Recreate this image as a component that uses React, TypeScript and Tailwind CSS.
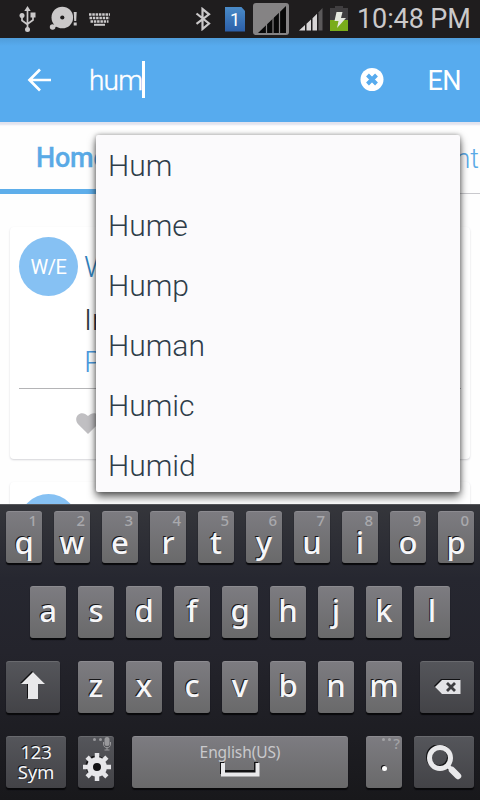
import type { ReactNode } from 'react'
import { clsx } from 'clsx'

const SUGGESTIONS = ['Hum', 'Hume', 'Hump', 'Human', 'Humic', 'Humid']

const TOP_ROW = [
  ['q', '1'],
  ['w', '2'],
  ['e', '3'],
  ['r', '4'],
  ['t', '5'],
  ['y', '6'],
  ['u', '7'],
  ['i', '8'],
  ['o', '9'],
  ['p', '0'],
]
const HOME_ROW = ['a', 's', 'd', 'f', 'g', 'h', 'j', 'k', 'l']
const BOTTOM_ROW = ['z', 'x', 'c', 'v', 'b', 'n', 'm']

export default function App() {
  return (
    <div className="flex h-[800px] w-[480px] flex-col overflow-hidden bg-white font-['Roboto',sans-serif]">
      <StatusBar />
      <SearchBar />
      <main className="relative h-[382px] shrink-0">
        <div className="h-full overflow-hidden bg-[#fefefe] shadow-[inset_0_5px_2px_-2px_#e2e3ee]">
          <Tabs />
          <Feed />
        </div>
        <Suggestions />
      </main>
      <Keyboard />
    </div>
  )
}

function StatusBar() {
  return (
    <div className="h-[38px] shrink-0 bg-[#1f1d1e]">
      <div className="flex h-full items-center text-[#cbc9ca]">
        <svg className="ml-[18px] shrink-0" width="19" height="28" viewBox="0 0 19 28" fill="none" stroke="currentColor" strokeWidth="1.7">
          <path d="M9.5 4v20M4 12v3.5l5.5 4M15 10v5l-5.5 4" />
          <path d="m9.5 1 3.2 5H6.3zM12.5 7.5h5v5h-5z" fill="currentColor" stroke="none" />
          <circle cx="4" cy="10.5" r="2.5" fill="currentColor" stroke="none" />
          <circle cx="9.5" cy="24.5" r="2.5" fill="currentColor" stroke="none" />
        </svg>
        <svg className="mb-0.5 ml-3 shrink-0" width="29" height="26" viewBox="0 0 29 26" fill="currentColor">
          <circle cx="13.3" cy="12.5" r="10.8" />
          <circle cx="13.3" cy="12.5" r="2.1" fill="#1f1d1e" />
          <circle cx="3.6" cy="22" r="2.8" />
          <path d="m5 19 3 2-3 2z" />
          <path d="M24.7 7h3l-.5 9h-2zM24.7 17.5h3v3h-3z" />
        </svg>
        <svg className="ml-[10px] shrink-0" width="23" height="13" viewBox="0 0 23 13" stroke="currentColor" strokeWidth="2.5">
          <path d="M1 1.5h21M1.5 5h20M2.5 8.5h18" strokeDasharray="2.5 0.8" />
          <path d="M6 11.8h11" strokeWidth="2" />
        </svg>
        <svg className="ml-[84px] shrink-0" width="16" height="24" viewBox="0 0 16 24" fill="none" stroke="currentColor" strokeWidth="2.2">
          <path d="m1.5 6.5 12.5 10-6.5 5.5V2l6.5 5.3-12.5 9.5" />
        </svg>
        <div className="ml-[14px] h-[25px] w-[20px] shrink-0 bg-[linear-gradient(#4a8bc8,#2b5ea8)] text-center text-[18px] leading-[25px] text-white [clip-path:polygon(0_0,80%_0,100%_18%,100%_100%,0_100%)]">
          1
        </div>
        <svg className="ml-2 shrink-0" width="36" height="32" viewBox="0 0 36 32">
          <rect width="36" height="32" rx="3" fill="#858384" />
          <path d="M5 30 33 3v27z" fill="#080808" />
          <path d="M13.5 16v14M20 10v20M26.5 4v26" stroke="#858384" strokeWidth="1.2" />
        </svg>
        <svg className="ml-[9px] shrink-0" width="26" height="24" viewBox="0 0 26 24">
          <path d="M1 23.5 7 18v5.5zM8.5 16.7l4.5-4.2v11H8.5zM14.5 11.2l4.5-4.4v16.7h-4.5z" fill="#d8d6d7" />
          <path d="M20.5 5.3 24.5 1v22.5h-4z" fill="#5b595a" />
        </svg>
        <svg className="ml-[6px] shrink-0" width="18" height="26" viewBox="0 0 18 26">
          <path d="M5 0h8v2h5v13H0V2h5z" fill="#403e40" />
          <path d="M0 14h18v11H0z" fill="#79ac1a" />
          <path d="M6.5 6h6L11 12h5L7 22l1.5-7h-4z" fill="#e5e8df" />
        </svg>
        <span className="ml-[9px] text-[27px] leading-[38px] tracking-[-0.1px] whitespace-nowrap">10:48 PM</span>
      </div>
    </div>
  )
}

function SearchBar() {
  return (
    <header className="flex h-[84px] shrink-0 items-center bg-[linear-gradient(#509dda,#57abee_8px)] text-white">
      <svg className="ml-[26px] shrink-0" width="26" height="24" viewBox="0 0 26 24" fill="none" stroke="currentColor" strokeWidth="2.7">
        <path d="M14 1.5 3.5 12 14 22.5M3 12h22" />
      </svg>
      <span className="mt-[2px] ml-[37px] text-[28px] leading-8 font-light tracking-[-0.8px] [-webkit-text-stroke:0.4px_white]">hum</span>
      <span className="-mt-px h-[37px] w-[3px] bg-white" />
      <svg className="ml-auto shrink-0" width="24" height="24" viewBox="0 0 24 24">
        <circle cx="12" cy="11.5" r="11.5" fill="white" />
        <path d="m7.5 7 9 9m0-9-9 9" stroke="#57abee" strokeWidth="4" />
      </svg>
      <span className="mt-[2px] mr-[19px] ml-[43px] text-[27px] leading-8 tracking-[-0.5px]">EN</span>
    </header>
  )
}

function Tabs() {
  return (
    <nav className="flex h-[72px] justify-between text-[27px] leading-[72px] text-[#5aaae6]">
      <div className="w-[160px] border-b-[5px] border-[#5eaeea] pl-[36px] font-medium tracking-[-0.2px] [-webkit-text-stroke:0.3px_#5aaae6]">Home</div>
      <div className="flex flex-1 justify-end overflow-hidden border-b border-[#c9c9cd] pt-px pr-px font-light">
        <span>nt</span>
      </div>
    </nav>
  )
}

function Feed() {
  return (
    <div className="flex flex-col gap-[23px] px-[10px] pt-[33px]">
      <article className="h-[232px] rounded-sm bg-white px-[9px] pt-[10px] shadow-[0_1px_2px_#d4d4d8]">
        <div className="flex h-[152px] gap-[6px] border-b border-[#b4b4b6]">
          <Avatar />
          <div className="text-[30px] leading-[48px] font-light text-[#4c9ade]">
            <p className="mt-[6px] text-[#3181bc]">W</p>
            <p className="mt-[5px] text-[#26333d]">In</p>
            <p className="-mt-[6px]">P</p>
          </div>
        </div>
        <svg className="mt-[24px] ml-[57px]" width="24" height="21" viewBox="0 0 24 21" fill="#c0bfc2">
          <path d="M12 21 2.4 11.5C-.7 8-.3 4 2 1.9c2.5-2.6 7-2.3 10 1.2 3-3.5 7.5-3.8 10-1.2 2.3 2.1 2.7 6.1-.4 9.6z" />
        </svg>
      </article>
      <article className="h-[232px] rounded-sm bg-white px-[9px] pt-[12px] shadow-[0_1px_2px_#d4d4d8]">
        <Avatar />
      </article>
    </div>
  )
}

function Avatar() {
  return (
    <div className="flex size-[59px] shrink-0 items-center justify-center rounded-full bg-[#86c1f3] text-[20px] tracking-[-0.4px] text-white">
      W/E
    </div>
  )
}

function Suggestions() {
  return (
    <ul className="absolute top-[13px] left-[96px] h-[357px] w-[364px] rounded-[2px] bg-[#fbfafc] shadow-[0_5px_9px_rgba(0,0,0,0.6),0_0_5px_rgba(0,0,0,0.35)]">
      {SUGGESTIONS.map((word) => (
        <li key={word} className="h-[60px] pl-[12px] text-[30px] leading-[61px] font-light text-[#2f3d49]">
          {word}
        </li>
      ))}
    </ul>
  )
}

type KeyProps = {
  children: ReactNode
  className?: string
  dark?: boolean
}

function Key({ children, className = 'w-[36px]', dark = false }: KeyProps) {
  return (
    <button
      type="button"
      className={clsx(
        'relative flex h-[52px] shrink-0 items-center justify-center rounded-[3px] text-[#f6f6f8] shadow-[0_2px_1px_#08080a,inset_0_1px_0_rgba(255,255,255,0.12)] [text-shadow:-1px_-1px_0_#161618]',
        dark ? 'bg-[linear-gradient(#55565b,#434347)]' : 'bg-[linear-gradient(#7d7c81,#69696a)]',
        className,
      )}
    >
      {children}
    </button>
  )
}

function Letter({ children }: { children: string }) {
  return <span className="pb-[5px] text-[31px] leading-[36px] font-medium">{children}</span>
}

function Keyboard() {
  return (
    <section className="flex h-[296px] shrink-0 flex-col gap-[23px] border-t border-[#55565a] bg-[linear-gradient(#35363b,#262730_25%,#24242c_50%,#18181b)] px-[6px] pt-[6px] font-['Noto_Sans',sans-serif]">
      <div className="flex gap-3">
        {TOP_ROW.map(([letter, digit]) => (
          <Key key={letter} className="w-[36px] flex-col">
            <span className="self-end pr-[5px] text-[15px] leading-[16px] font-medium text-[#a9a9ad] [text-shadow:none]">{digit}</span>
            <span className="pb-[7px] text-[31px] leading-[28px] font-medium">{letter}</span>
          </Key>
        ))}
      </div>
      <div className="flex justify-center gap-3">
        {HOME_ROW.map((letter) => (
          <Key key={letter}>
            <Letter>{letter}</Letter>
          </Key>
        ))}
      </div>
      <div className="flex justify-between">
        <Key dark className="w-[54px]">
          <svg className="mb-1" width="26" height="28" viewBox="0 0 26 28">
            <path d="M12 0 0 12h7v15h10V12h7z" fill="#101012" />
            <path d="M13 1 1 13h7v15h10V13h7z" fill="#e9e9eb" />
          </svg>
        </Key>
        <div className="flex gap-3">
          {BOTTOM_ROW.map((letter) => (
            <Key key={letter}>
              <Letter>{letter}</Letter>
            </Key>
          ))}
        </div>
        <Key dark className="w-[54px]">
          <svg width="27" height="16" viewBox="0 0 27 16">
            <path d="M7 0h19v14H7L0 7z" fill="#101012" />
            <path d="M8 1h18.5v14H8L1 8z" fill="#e3e3e6" />
            <path d="m13 4 8 8m0-8-8 8" stroke="#3d3d40" strokeWidth="2.8" />
          </svg>
        </Key>
      </div>
      <div className="flex">
        <Key dark className="w-[60px] flex-col text-[18.5px] leading-[20px] tracking-[-0.2px]">
          <span>123</span>
          <span>Sym</span>
        </Key>
        <Key dark className="ml-3 w-[36px]">
          <GearIcon />
          <svg className="absolute top-px right-[2px]" width="20" height="14" viewBox="0 0 20 14" fill="#98989b">
            <circle cx="2.5" cy="2.5" r="1.5" />
            <circle cx="8.5" cy="2.5" r="1.5" />
            <rect x="12.5" y="0" width="5" height="9" rx="2.5" />
            <path d="M11.5 5v2c0 5 7 5 7 0V5M15 10v3m-2.5 0h5" fill="none" stroke="#98989b" />
          </svg>
        </Key>
        <Key className="ml-[18px] w-[216px] flex-col">
          <span className="text-[15.5px] leading-[20px] tracking-[-0.1px] text-[#c9c9cc] [text-shadow:none]">English(US)</span>
          <svg className="mb-[5px]" width="40" height="15" viewBox="0 0 40 15" fill="none">
            <path d="M2 0v10h34V0" stroke="#121214" strokeWidth="4" />
            <path d="M3 1v11.5h34.5V1" stroke="#e9e9eb" strokeWidth="4" />
          </svg>
        </Key>
        <Key className="ml-[18px] w-[36px]">
          <span className="mt-[13px] size-[5px] rounded-full bg-white shadow-[-1px_-1px_0_#161618]" />
          <span className="absolute top-[2px] right-[11px] flex gap-[3px] text-[#a2a2a5]">
            <i className="size-[3px] rounded-full bg-current" />
            <i className="size-[3px] rounded-full bg-current" />
          </span>
          <span className="absolute top-0 right-[2px] text-[15px] leading-[14px] font-medium text-[#a2a2a5] [text-shadow:none]">?</span>
        </Key>
        <Key dark className="ml-3 w-[60px]">
          <svg className="mt-[2px]" width="36" height="36" viewBox="0 0 36 36" fill="none">
            <g stroke="#121214">
              <circle cx="13" cy="12" r="10.5" strokeWidth="5" />
              <path d="m20 20 4 4" strokeWidth="4" />
            </g>
            <g stroke="#e9e9eb">
              <circle cx="14" cy="13" r="10.5" strokeWidth="5" />
              <path d="m21 20 5 5" strokeWidth="4" />
              <path d="m26 25 6 6" strokeWidth="6.5" strokeLinecap="round" />
            </g>
          </svg>
        </Key>
      </div>
    </section>
  )
}

const GEAR_ANGLES = [0, 45, 90, 135]

function GearIcon() {
  return (
    <svg className="mt-[10px] ml-px" width="30" height="30" viewBox="0 0 30 30">
      <circle cx="14" cy="14" r="10.5" fill="#131315" />
      <circle cx="15" cy="15" r="7" fill="none" stroke="#e6e6e9" strokeWidth="6" />
      {GEAR_ANGLES.map((angle) => (
        <path key={angle} d="M15 1v6m0 16v6" stroke="#e6e6e9" strokeWidth="4.5" transform={`rotate(${angle} 15 15)`} />
      ))}
    </svg>
  )
}
